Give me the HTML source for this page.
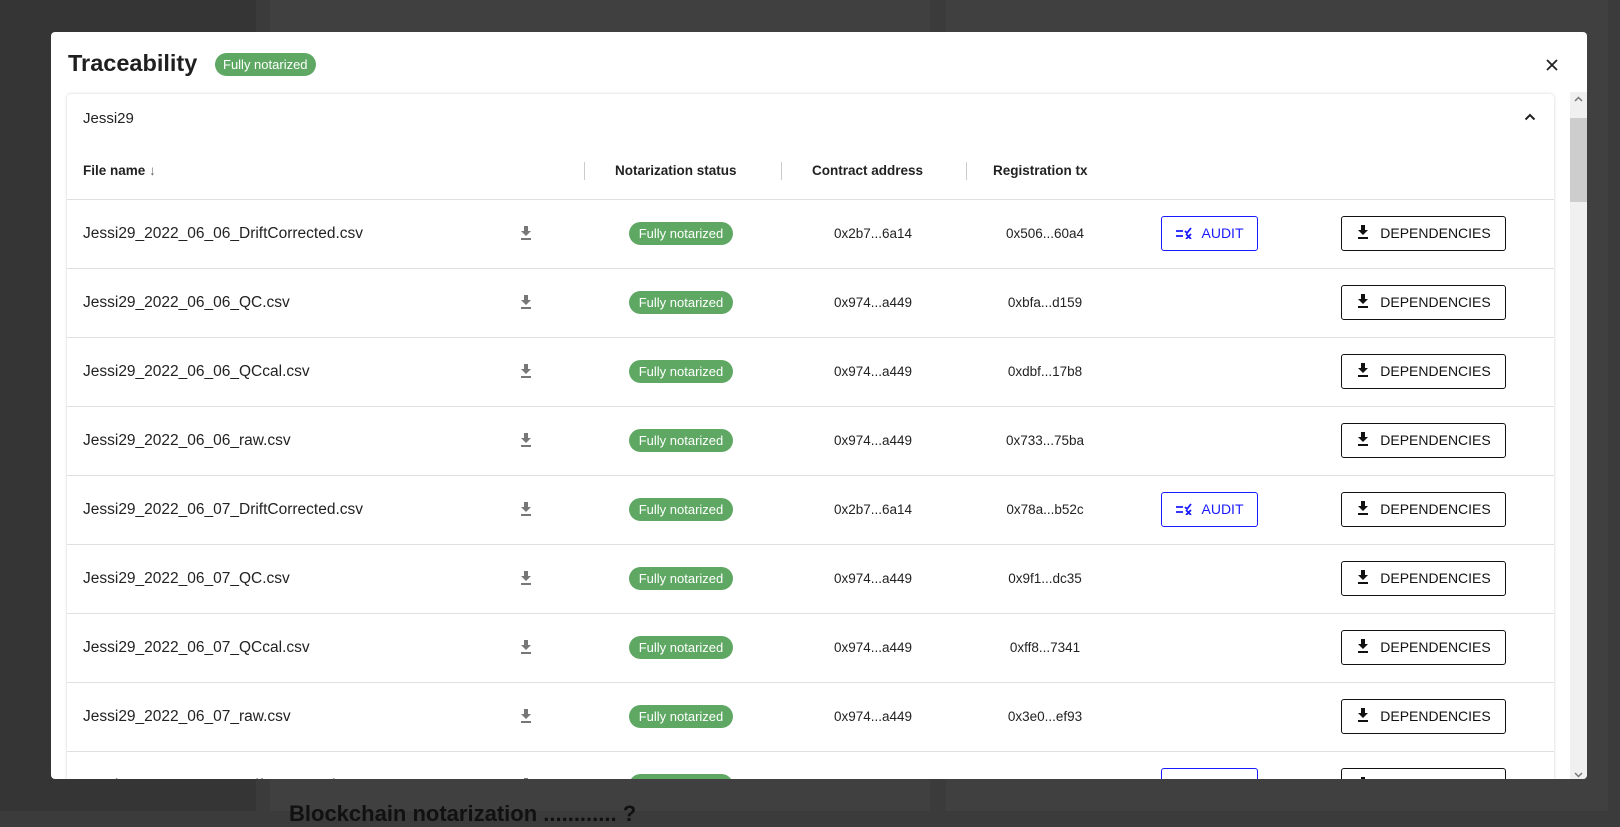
<!DOCTYPE html>
<html><head><meta charset="utf-8"><style>
*{box-sizing:border-box;margin:0;padding:0}
body{width:1620px;height:811px;overflow:hidden;background:#3b3b3b;font-family:"Liberation Sans",Arial,sans-serif;position:relative}
.bgl{position:absolute;left:0;top:0;width:256px;height:811px;background:#353535}
.bgp1{position:absolute;left:270px;top:0;width:660px;height:811px;background:#404040}
.bgp2{position:absolute;left:946px;top:0;width:662px;height:811px;background:#404040}
.modal{position:absolute;left:51px;top:32px;width:1536px;height:747px;background:#fff;border-radius:4px;overflow:hidden}
.title{position:absolute;left:17px;top:18px;font-size:23.5px;font-weight:bold;color:#1f1f1f}
.pill{display:inline-block;background:#5fa863;color:#fff;border-radius:12px;font-size:13px;height:23px;line-height:23px;padding:0 8px;text-align:center}
.tpill{position:absolute;left:164px;top:21px}
.close{position:absolute;left:1493px;top:25px}
.card{position:absolute;left:16px;top:62px;width:1487px;height:700px;border-radius:4px;box-shadow:0 0 3px rgba(0,0,0,.18);background:#fff}
.sb{position:absolute;left:1519px;top:60px;width:17px;height:690px;background:#f0f0f0}
.thumb{position:absolute;left:0;top:26px;width:17px;height:84px;background:#cdcdcd}
.grp{position:absolute;left:16px;top:16px;font-size:15px;color:#222}
.chev{position:absolute;left:1457px;top:19px}
.hdr{position:absolute;top:69px;font-size:13.5px;font-weight:bold;color:#222}
.sep{position:absolute;top:68px;width:1px;height:18px;background:#ccc}
.row{position:absolute;left:0;width:1487px;height:69px;border-top:1px solid #e0e0e0}
.fn{position:absolute;left:16px;top:25px;font-size:15.5px;color:#222}
.dl{position:absolute;left:452px;top:25px}
.st{position:absolute;left:562px;top:22px;width:104px}
.c{position:absolute;top:26px;font-size:13.5px;color:#222;text-align:center;width:160px}
.aud{position:absolute;left:1094px;top:16px;width:97px;height:35px;border:1px solid #1a1aff;border-radius:3px;color:#1a1aff;font-size:14px;line-height:33px}
.dep{position:absolute;left:1274px;top:16px;width:165px;height:35px;border:1px solid #111;border-radius:3px;color:#111;font-size:14px;line-height:33px}
</style></head><body>
<div class="bgl"></div><div class="bgp1"></div><div class="bgp2"></div>
<div style="position:absolute;left:289px;top:801px;font-size:22px;font-weight:bold;color:#111">Blockchain notarization ............ ?</div>
<div class="modal">
<div class="title">Traceability</div>
<div class="pill tpill">Fully notarized</div>
<svg class="close" width="16" height="16" viewBox="0 0 16 16"><path d="M3 3L13 13M13 3L3 13" stroke="#222" stroke-width="1.8"/></svg>
<div class="card">
<div class="grp">Jessi29</div>
<svg class="chev" width="12" height="8" viewBox="0 0 12 8"><path d="M1.5 6.5L6 2L10.5 6.5" stroke="#222" stroke-width="2" fill="none"/></svg>
<div class="hdr" style="left:16px">File name <span style="font-weight:normal;color:#666">&#8595;</span></div>
<div class="sep" style="left:517px"></div>
<div class="hdr" style="left:548px">Notarization status</div>
<div class="sep" style="left:714px"></div>
<div class="hdr" style="left:745px">Contract address</div>
<div class="sep" style="left:899px"></div>
<div class="hdr" style="left:926px">Registration tx</div>
<div id="rows"></div>
</div>
<div class="sb"><div class="thumb"></div>
<svg style="position:absolute;left:4px;top:4px" width="9" height="6"><path d="M1 5L4.5 1.5L8 5" stroke="#777" stroke-width="1.5" fill="none"/></svg>
<svg style="position:absolute;left:4px;top:680px" width="9" height="6"><path d="M1 1L4.5 4.5L8 1" stroke="#777" stroke-width="1.5" fill="none"/></svg>
</div>
</div>
<script>
var d=[["Jessi29_2022_06_06_DriftCorrected.csv","0x2b7...6a14","0x506...60a4",1],["Jessi29_2022_06_06_QC.csv","0x974...a449","0xbfa...d159",0],["Jessi29_2022_06_06_QCcal.csv","0x974...a449","0xdbf...17b8",0],["Jessi29_2022_06_06_raw.csv","0x974...a449","0x733...75ba",0],["Jessi29_2022_06_07_DriftCorrected.csv","0x2b7...6a14","0x78a...b52c",1],["Jessi29_2022_06_07_QC.csv","0x974...a449","0x9f1...dc35",0],["Jessi29_2022_06_07_QCcal.csv","0x974...a449","0xff8...7341",0],["Jessi29_2022_06_07_raw.csv","0x974...a449","0x3e0...ef93",0],["Jessi29_2022_06_08_DriftCorrected.csv","0x2b7...6a14","0x000...0000",1]];
var dl='<svg width="14" height="16" viewBox="0 0 14 16"><path d="M5 1h4v5h3l-5 5-5-5h3z" fill="#777"/><rect x="2" y="13" width="10" height="2" fill="#777"/></svg>';
var dk='<svg width="14" height="16" viewBox="0 0 14 16" style="vertical-align:-2px;margin-right:10px"><path d="M5 1h4v5h3l-5 5-5-5h3z" fill="#111"/><rect x="2" y="13" width="10" height="2" fill="#111"/></svg>';
var au='<svg width="17" height="12" viewBox="0 0 17 12" style="vertical-align:-1px;margin-right:9px"><path d="M0 4h7M0 9h7M9 4l2 2 4-5M10 7l5 5M15 7l-5 5" stroke="#1a1aff" stroke-width="1.8" fill="none"/></svg>';
var h='';
d.forEach(function(r,i){var t=105+i*69;
h+='<div class="row" style="top:'+t+'px"><div class="fn">'+r[0]+'</div><div class="dl">'+dl+'</div><div class="pill st">Fully notarized</div><div class="c" style="left:726px">'+r[1]+'</div><div class="c" style="left:898px">'+r[2]+'</div>'+(r[3]?'<div class="aud" style="text-align:center">'+au+'AUDIT</div>':'')+'<div class="dep" style="text-align:center">'+dk+'DEPENDENCIES</div></div>';});
document.getElementById('rows').innerHTML=h;
</script>
</body></html>
